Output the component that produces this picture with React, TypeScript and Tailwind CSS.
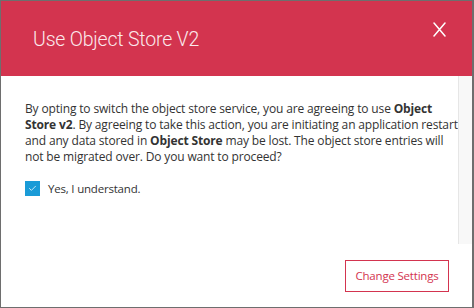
import { Check } from 'lucide-react';

export default function App() {
  return (
    <div className="w-[474px] h-[308px] bg-white border-t border-l border-b border-r-2 border-[#6e6e6e] flex flex-col overflow-hidden">
      <header className="h-[75px] shrink-0 bg-[#d3344f] flex justify-between pl-[32px] pr-[26px]">
        <h1 className="mt-[25px] text-[19.5px] leading-[28px] font-light text-[#fbe9ec] tracking-[-0.2px]" style={{ fontFamily: 'Roboto, sans-serif' }}>
          Use Object Store V2
        </h1>
        <button className="mt-[21px] h-[15px] w-[13px] text-white">
          <svg width="13" height="15" viewBox="0 0 13 15" fill="none" stroke="currentColor" strokeWidth="1.5" strokeLinecap="round">
            <path d="M1 1L12 14M12 1L1 14" />
          </svg>
        </button>
      </header>

      <div className="flex h-[168px] shrink-0">
        <div className="w-[457px] pl-[24px] pt-[25px] overflow-hidden" style={{ fontFamily: '"Open Sans", sans-serif' }}>
          <p className="whitespace-nowrap text-[12px] leading-[16px] text-[#333] tracking-[-0.15px]">
            By opting to switch the object store service, you are agreeing to use <b>Object</b>
            <br />
            <b>Store v2</b>. By agreeing to take this action, you are initiating an application restart
            <br />
            and any data stored in <b>Object Store</b> may be lost. The object store entries will
            <br />
            not be migrated over. Do you want to proceed?
          </p>
          <label className="mt-[15px] flex items-center gap-[8px] text-[11.5px] text-[#333] tracking-[-0.2px]">
            <span className="w-[15px] h-[15px] bg-[#1a9bd7] flex items-center justify-center text-white">
              <Check size={9} strokeWidth={2} />
            </span>
            Yes, I understand.
          </label>
        </div>
        <div className="w-[14px] bg-[#f8f8f8] border-l border-[#e6e6e6]" />
      </div>

      <footer className="flex-1 flex justify-end items-start pt-[16px] pr-[23px]">
        <button className="w-[104px] h-[32px] border border-[#d3344f] text-[#d3344f] text-[11.5px] tracking-[-0.2px]" style={{ fontFamily: '"Open Sans", sans-serif' }}>
          Change Settings
        </button>
      </footer>
    </div>
  );
}
